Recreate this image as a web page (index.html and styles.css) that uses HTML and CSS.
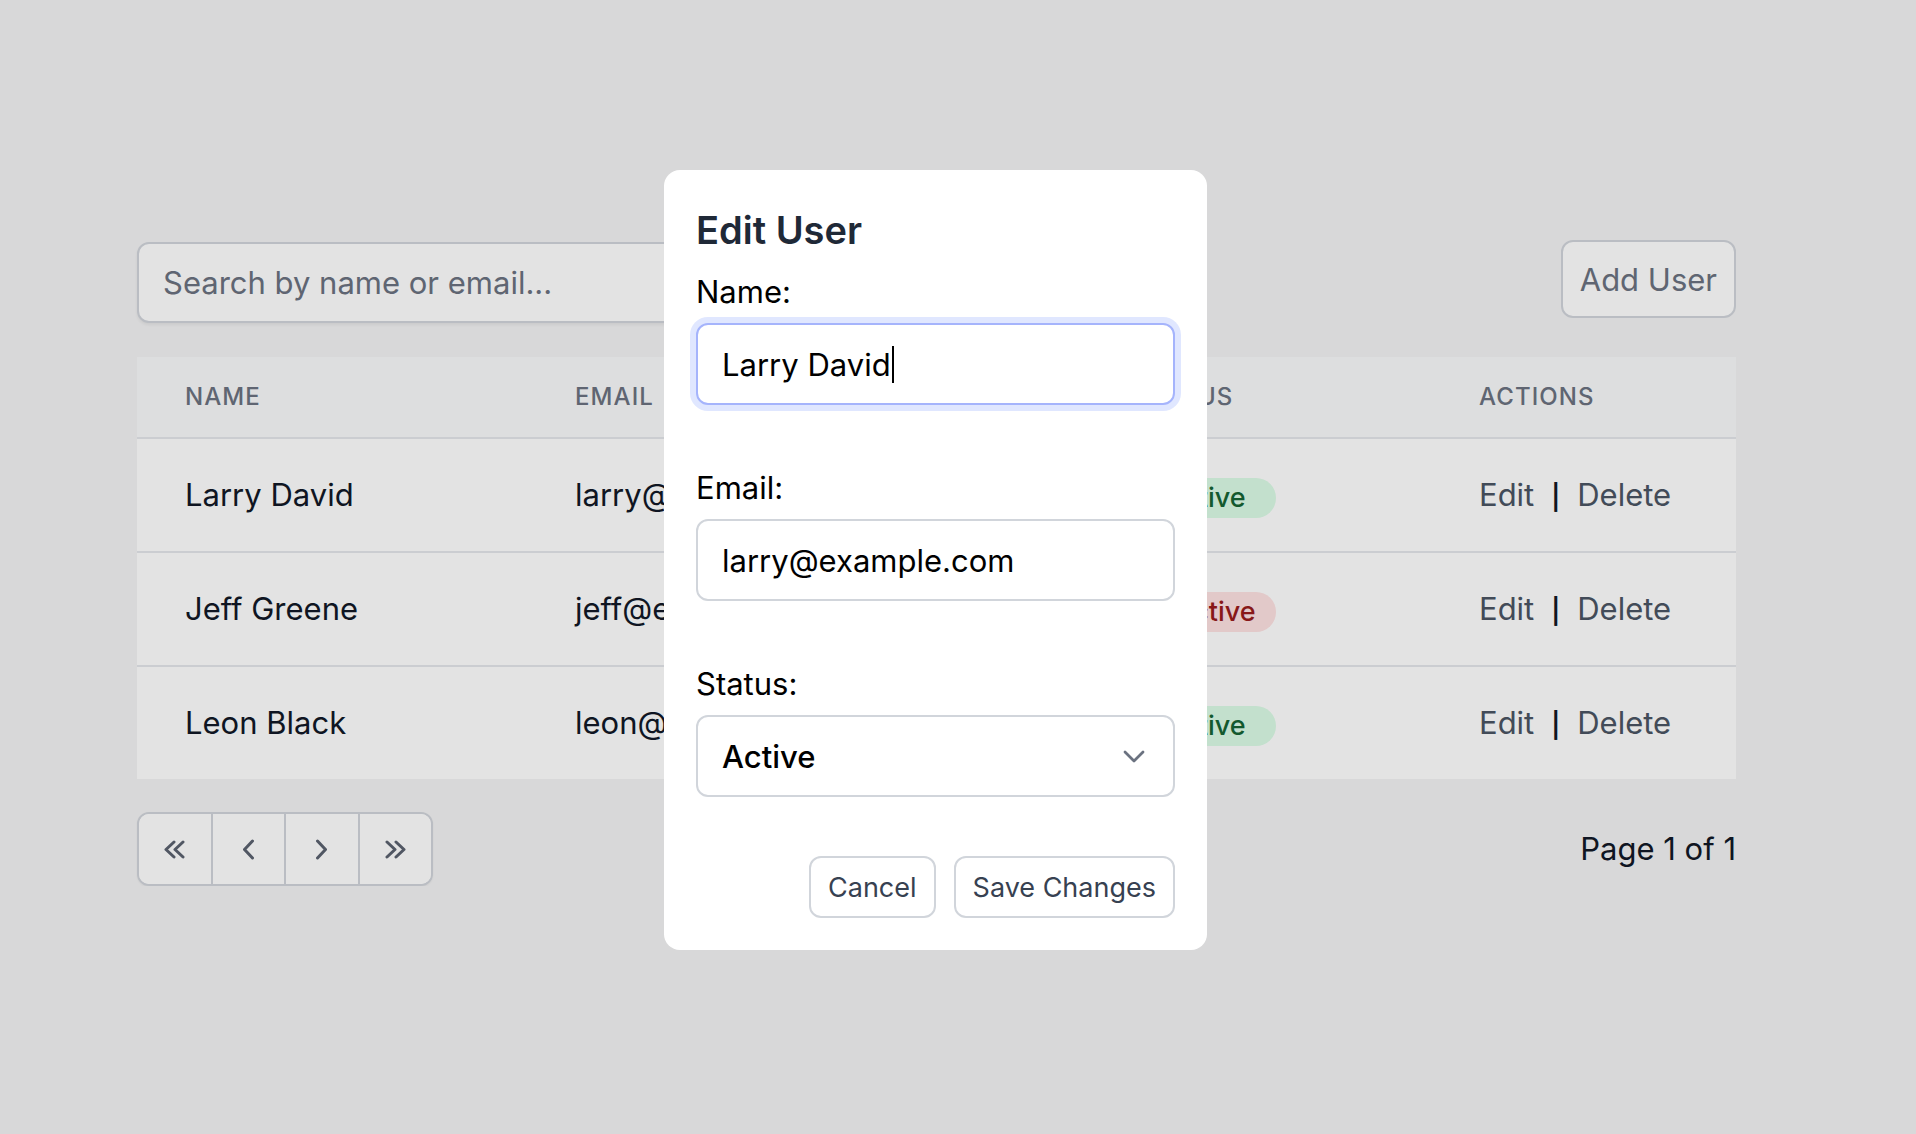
FILE: index.html
```html
<!DOCTYPE html>
<html lang="en">
<head>
<meta charset="utf-8">
<title>Users</title>
<link rel="stylesheet" href="styles.css">
</head>
<body>
<div class="page">
  <div class="toolbar">
    <input class="search" type="text" placeholder="Search by name or email...">
    <button class="btn-add" type="button">Add User</button>
  </div>

  <table class="users">
    <colgroup>
      <col class="col-name">
      <col class="col-email">
      <col class="col-status">
      <col class="col-actions">
    </colgroup>
    <thead>
      <tr><th>Name</th><th>Email</th><th>Status</th><th>Actions</th></tr>
    </thead>
    <tbody>
      <tr>
        <td>Larry David</td>
        <td>larry@example.com</td>
        <td><span class="badge badge-active">Active</span></td>
        <td><a class="action">Edit</a><span class="sep">|</span><a class="action">Delete</a></td>
      </tr>
      <tr>
        <td>Jeff Greene</td>
        <td>jeff@example.com</td>
        <td><span class="badge badge-inactive">Inactive</span></td>
        <td><a class="action">Edit</a><span class="sep">|</span><a class="action">Delete</a></td>
      </tr>
      <tr>
        <td>Leon Black</td>
        <td>leon@example.com</td>
        <td><span class="badge badge-active">Active</span></td>
        <td><a class="action">Edit</a><span class="sep">|</span><a class="action">Delete</a></td>
      </tr>
    </tbody>
  </table>

  <div class="pager">
    <div class="pager-group">
      <button class="pager-btn" type="button" aria-label="First page">
        <svg class="ico-double" viewBox="0 0 23 19"><polyline points="11,2 3,9.5 11,17"/><polyline points="20,2 12,9.5 20,17"/></svg>
      </button>
      <button class="pager-btn" type="button" aria-label="Previous page">
        <svg class="ico-single" viewBox="0 0 13 21"><polyline points="10.5,2 2.5,10.5 10.5,19"/></svg>
      </button>
      <button class="pager-btn" type="button" aria-label="Next page">
        <svg class="ico-single" viewBox="0 0 13 21"><polyline points="2.5,2 10.5,10.5 2.5,19"/></svg>
      </button>
      <button class="pager-btn" type="button" aria-label="Last page">
        <svg class="ico-double" viewBox="0 0 23 19"><polyline points="3,2 11,9.5 3,17"/><polyline points="12,2 20,9.5 12,17"/></svg>
      </button>
    </div>
    <span class="page-info">Page 1 of 1</span>
  </div>
</div>

<div class="overlay">
  <div class="modal">
    <h2 class="modal-title">Edit User</h2>
    <div class="field">
      <label class="field-label">Name:</label>
      <div class="text-input is-focused">Larry David<span class="caret"></span></div>
    </div>
    <div class="field">
      <label class="field-label">Email:</label>
      <input class="text-input" type="text" value="larry@example.com">
    </div>
    <div class="field">
      <label class="field-label">Status:</label>
      <div class="select-wrap">
        <select class="text-input select">
          <option>Active</option>
          <option>Inactive</option>
        </select>
        <svg class="select-chevron" viewBox="0 0 22 13"><polyline points="2,2 11,11 20,2"/></svg>
      </div>
    </div>
    <div class="modal-actions">
      <button class="btn" type="button">Cancel</button>
      <button class="btn" type="button">Save Changes</button>
    </div>
  </div>
</div>
</body>
</html>
```

FILE: styles.css
```css
body {
  margin: 0;
  background: #f3f3f4;
  font-family: Inter, "Noto Sans", sans-serif;
  color: #111827;
}

.page {
  width: 1599px;
  margin-left: 137px;
  padding-top: 240px;
}

.toolbar {
  display: flex;
  justify-content: space-between;
  align-items: flex-start;
}

.search {
  box-sizing: border-box;
  width: 780px;
  height: 81px;
  margin: 2px 0 0;
  padding: 0 24px;
  border: 2px solid #d1d5db;
  border-radius: 12px;
  background: #fff;
  font-family: Inter, sans-serif;
  font-size: 31px;
  color: #111827;
  box-shadow: 0 2px 3px rgba(0, 0, 0, 0.06);
  outline: none;
}

.search::placeholder {
  color: #6b7280;
}

.btn-add {
  box-sizing: border-box;
  height: 78px;
  padding: 0 17px;
  border: 2px solid #d1d5db;
  border-radius: 12px;
  background: #fff;
  font-family: Inter, sans-serif;
  font-size: 31px;
  color: #6b7280;
}

.users {
  width: 100%;
  margin-top: 34px;
  border-collapse: separate;
  border-spacing: 0;
  table-layout: fixed;
  background: #fff;
}

.col-name { width: 390px; }
.col-email { width: 559px; }
.col-status { width: 345px; }
.col-actions { width: 305px; }

.users th {
  padding: 28px 48px;
  line-height: 24px;
  font-size: 24px;
  font-weight: 500;
  letter-spacing: 0.045em;
  text-transform: uppercase;
  text-align: left;
  color: #6b7280;
  background: #f9fafb;
  border-bottom: 2px solid #e5e7eb;
}

.users td {
  padding: 32px 48px;
  height: 48px;
  line-height: 48px;
  font-size: 31px;
  color: #111827;
  white-space: nowrap;
  overflow: hidden;
  border-bottom: 2px solid #e5e7eb;
}

.users tbody tr:last-child td {
  border-bottom: none;
}

.badge {
  display: inline-block;
  width: 142px;
  line-height: 40px;
  text-align: center;
  border-radius: 999px;
  font-size: 27px;
  font-weight: 500;
  vertical-align: middle;
}

.badge-active {
  background: #dcfce7;
  color: #166534;
}

.badge-inactive {
  background: #fee2e2;
  color: #991b1b;
}

.action {
  color: #4b5563;
}

.sep {
  margin: 0 17px;
  font-size: 25px;
  line-height: 1;
  font-weight: 600;
  color: #111827;
}

.pager {
  display: flex;
  justify-content: space-between;
  align-items: center;
  margin-top: 33px;
}

.pager-group {
  display: flex;
  border: 2px solid #d1d5db;
  border-radius: 12px;
  overflow: hidden;
  background: #fff;
  box-shadow: 0 1px 2px rgba(0, 0, 0, 0.05);
}

.pager-btn {
  box-sizing: content-box;
  width: 71.5px;
  height: 70px;
  padding: 0;
  border: none;
  background: #fff;
  display: flex;
  align-items: center;
  justify-content: center;
}

.pager-btn + .pager-btn {
  border-left: 2px solid #d1d5db;
}

.pager-btn svg {
  fill: none;
  stroke: #5b6270;
  stroke-width: 3;
  stroke-linecap: round;
  stroke-linejoin: round;
}

.ico-double {
  width: 23px;
  height: 19px;
}

.ico-single {
  width: 13px;
  height: 21px;
}

.page-info {
  font-size: 31px;
  line-height: 48px;
  color: #111827;
}

.overlay {
  position: fixed;
  inset: 0;
  background: rgba(0, 0, 0, 0.11);
}

.modal {
  position: absolute;
  left: 664px;
  top: 170px;
  width: 543px;
  box-sizing: border-box;
  padding: 32px;
  background: #fff;
  border-radius: 16px;
}

.modal-title {
  margin: 0 0 10px;
  font-size: 38px;
  line-height: 56px;
  font-weight: 600;
  color: #1f2937;
}

.field {
  margin-bottom: 59px;
}

.field:last-of-type {
  margin-bottom: 0;
}

.field-label {
  display: block;
  margin-bottom: 7px;
  font-size: 31px;
  line-height: 48px;
  color: #000;
}

.text-input {
  box-sizing: border-box;
  display: flex;
  align-items: center;
  width: 100%;
  height: 82px;
  margin: 0;
  padding: 0 24px;
  border: 2px solid #d1d5db;
  border-radius: 12px;
  background: #fff;
  font-family: Inter, sans-serif;
  font-size: 31px;
  color: #000;
  outline: none;
}

.text-input.is-focused {
  border-color: #a5b4fc;
  box-shadow: 0 0 0 6px #e0e7ff;
}

.caret {
  display: inline-block;
  width: 2px;
  height: 37px;
  margin-left: 1px;
  background: #000;
}

.select-wrap {
  position: relative;
}

.select {
  appearance: none;
  -webkit-appearance: none;
  font-weight: 500;
}

.select-chevron {
  position: absolute;
  right: 30px;
  top: 35px;
  width: 22px;
  height: 13px;
  fill: none;
  stroke: #6b7280;
  stroke-width: 2.8;
  stroke-linecap: round;
  stroke-linejoin: round;
  pointer-events: none;
}

.modal-actions {
  display: flex;
  justify-content: flex-end;
  gap: 18px;
  margin-top: 58px;
}

.btn {
  box-sizing: border-box;
  height: 62px;
  padding: 0 17px;
  border: 2px solid #d1d5db;
  border-radius: 12px;
  background: #fff;
  font-family: Inter, sans-serif;
  font-size: 27px;
  color: #374151;
}
```
